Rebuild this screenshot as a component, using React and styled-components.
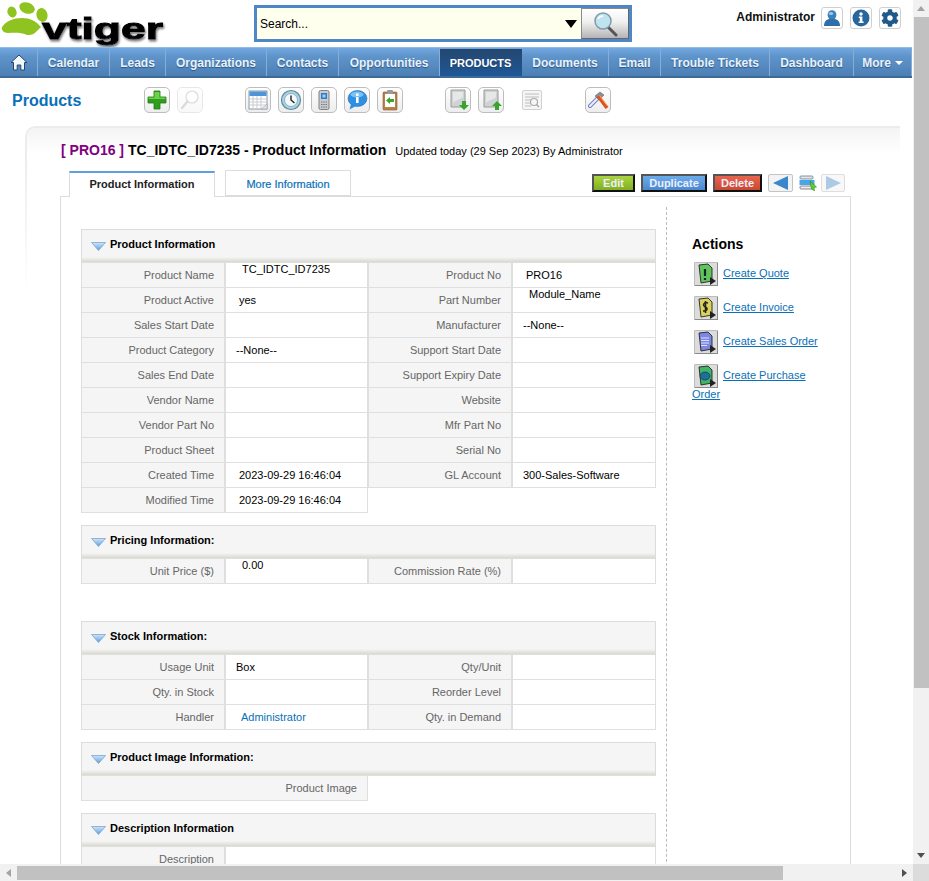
import React from 'react';
import styled, { createGlobalStyle } from 'styled-components';
import { FaCog } from 'react-icons/fa';

const GlobalStyle = createGlobalStyle`
    html, body {
        margin: 0;
        height: 100%;
        overflow: hidden;
        background: #fff;
        font-family: "Liberation Sans", Arial, sans-serif;
        font-size: 11px;
    }
`;

/* window frame with the two scrollbars */
const Shell = styled.div`
    display: grid;
    grid-template-columns: 913px 16px;
    grid-template-rows: 864px 17px;
    width: 929px;
    height: 881px;
`;

const Viewport = styled.div`
    overflow: hidden;
`;

const ScrollTrack = styled.div`
    display: flex;
    flex-direction: ${(p) => (p.$vertical ? 'column' : 'row')};
    background: #f1f1f1;
`;

const ScrollArrow = styled.div`
    flex: 0 0 17px;
    display: flex;
    align-items: center;
    justify-content: center;
    color: ${(p) => (p.$off ? '#a3a3a3' : '#505050')};
`;

const ScrollThumb = styled.div`
    flex: 0 0 ${(p) => p.$size}px;
    background: #c1c1c1;
    margin: ${(p) => (p.$vertical ? '0 0 0 1px' : '2px 0 1px 0')};
`;

const ScrollRest = styled.div`
    flex: 1;
`;

const ScrollCorner = styled.div`
    background: #dcdcdc;
`;

/* header */
const Header = styled.div`
    display: flex;
    height: 47px;
    width: 912px;
`;

const LogoBox = styled.div`
    flex: 0 0 254px;
`;

const SearchBox = styled.div`
    display: flex;
    align-items: center;
    box-sizing: border-box;
    width: 378px;
    height: 37px;
    margin-top: 5px;
    border: 3px solid #4f86c6;
    background: #ffffee;
`;

const SearchText = styled.div`
    flex: 1;
    padding-left: 3px;
    font-size: 12px;
    color: #000;
`;

const SearchCaret = styled.div`
    width: 0;
    height: 0;
    margin-right: 4px;
    border-left: 6px solid transparent;
    border-right: 6px solid transparent;
    border-top: 8px solid #000;
`;

const SearchButton = styled.div`
    display: flex;
    align-items: center;
    justify-content: center;
    box-sizing: border-box;
    width: 48px;
    height: 31px;
    border: 1px solid #8a8a8a;
    border-right-color: #666;
    border-bottom-color: #666;
    background: linear-gradient(#ffffff, #f0f0f0 45%, #b4b4b4);
`;

const UserArea = styled.div`
    display: flex;
    align-items: flex-start;
    gap: 7px;
    margin-left: auto;
    padding: 7px 11px 0 0;
`;

const UserName = styled.div`
    margin: 3px -1px 0 0;
    font-size: 12px;
    font-weight: bold;
    color: #111;
`;

const UserIcon = styled.div`
    display: flex;
    align-items: center;
    justify-content: center;
    box-sizing: border-box;
    width: 22px;
    height: 22px;
    border: 1px solid #cfcfcf;
    border-radius: 3px;
    color: #1f5a8c;
    background: #fff;
`;

/* main menu */
const Nav = styled.div`
    display: flex;
    box-sizing: border-box;
    width: 912px;
    height: 31px;
    background: linear-gradient(#72a9e0, #5f94cb 30%, #4c7fb4);
    border-top: 1px solid #8fbce8;
    border-bottom: 2px solid #3d6a96;
`;

const NavItem = styled.div`
    display: flex;
    align-items: center;
    justify-content: center;
    box-sizing: border-box;
    width: ${(p) => p.$w}px;
    margin-top: 1px;
    font-size: ${(p) => (p.$active ? 11 : 12)}px;
    font-weight: bold;
    color: ${(p) => (p.$active ? '#fff' : '#e8f2fb')};
    text-shadow: 0 1px 1px rgba(20, 50, 90, 0.6);
    border-right: 1px solid ${(p) => (p.$active ? 'transparent' : '#86aed8')};
    background: ${(p) => (p.$active ? 'linear-gradient(#24476f, #1f5797)' : 'none')};
`;

/* toolbar under the menu */
const ToolBar = styled.div`
    display: flex;
    align-items: flex-start;
    box-sizing: border-box;
    height: 48px;
    padding: 9px 0 0 12px;
`;

const PageTitle = styled.div`
    flex: 0 0 132px;
    padding-top: 5px;
    font-size: 16px;
    font-weight: bold;
    color: #0a70b8;
`;

const ToolGroup = styled.div`
    display: flex;
    align-items: center;
    gap: 7px;
    margin-right: ${(p) => p.$after || 0}px;
`;

const ToolButton = styled.div`
    box-sizing: border-box;
    width: 26px;
    height: 26px;
    border: 1px solid #bdbdbd;
    border-radius: 5px;
    background: linear-gradient(#ffffff, #ededed);
    opacity: ${(p) => (p.$faded ? 0.35 : 1)};
    & > svg {
        display: block;
        filter: blur(0.3px);
    }
`;

/* content card */
const Card = styled.div`
    position: relative;
    isolation: isolate;
    width: 875px;
    margin-left: 25px;
    padding: 16px 0 0 35px;
    box-sizing: border-box;
    &::before {
        content: '';
        position: absolute;
        z-index: -1;
        top: 0;
        left: 0;
        right: 0;
        height: 170px;
        box-sizing: border-box;
        border-top: 2px solid #ececec;
        border-left: 2px solid #ececec;
        border-top-left-radius: 10px;
        background: linear-gradient(#f4f4f4, #fff 26px);
        -webkit-mask-image: linear-gradient(#000 30px, transparent);
        mask-image: linear-gradient(#000 30px, transparent);
    }
`;

const TitleRow = styled.div`
    display: flex;
    align-items: baseline;
    height: 18px;
    margin-bottom: 10px;
    padding-left: 1px;
    color: #000;
`;

const RecordId = styled.span`
    margin-right: 4px;
    font-size: 14px;
    font-weight: bold;
    color: #800080;
`;

const RecordName = styled.span`
    margin-right: 9px;
    font-size: 14px;
    font-weight: bold;
`;

const Updated = styled.span`
    font-size: 11px;
`;

const TabBar = styled.div`
    position: relative;
    display: flex;
    align-items: flex-end;
    height: 27px;
    width: 791px;
    padding-left: 9px;
    box-sizing: border-box;
    margin-bottom: -1px;
`;

const Tab = styled.div`
    display: flex;
    align-items: center;
    justify-content: center;
    box-sizing: border-box;
    width: ${(p) => (p.$active ? 146 : 126)}px;
    height: 26px;
    margin: ${(p) => (p.$active ? '0 10px 0 0' : '0 0 1px 0')};
    padding: ${(p) => (p.$active ? '0 0 2px' : '2px 0 0')};
    border: 1px solid #dcdcdc;
    border-top: ${(p) => (p.$active ? '2px solid #5f9fdc' : '1px solid #dcdcdc')};
    border-bottom: ${(p) => (p.$active ? 'none' : '1px solid #dcdcdc')};
    background: #fff;
    font-size: 11px;
    font-weight: ${(p) => (p.$active ? 'bold' : 'normal')};
    color: ${(p) => (p.$active ? '#222' : '#0a70b8')};
    -webkit-text-stroke: ${(p) => (p.$active ? '0' : '0.2px #0a70b8')};
`;

const RecordActions = styled.div`
    display: flex;
    align-items: center;
    height: 18px;
    margin: 0 6px 5px auto;
`;

const ActionButton = styled.div`
    display: flex;
    align-items: center;
    justify-content: center;
    box-sizing: border-box;
    width: ${(p) => p.$w}px;
    height: 18px;
    margin-right: 6px;
    border: 2px solid;
    border-color: #555 #111 #111 #555;
    background: ${(p) => p.$bg};
    font-size: 11px;
    font-weight: bold;
    color: #eef;
`;

const PagerButton = styled.div`
    display: flex;
    align-items: center;
    justify-content: center;
    box-sizing: border-box;
    width: ${(p) => p.$w || 25}px;
    height: 18px;
    margin-left: ${(p) => p.$ml || 0}px;
    border: ${(p) => (p.$plain ? 'none' : '1px solid #c4c4c4')};
    border-radius: 2px;
    background: ${(p) => (p.$plain ? 'none' : '#f3f3f3')};
    opacity: ${(p) => (p.$faded ? 0.55 : 1)};
`;

const DetailBox = styled.div`
    display: flex;
    align-items: flex-start;
    box-sizing: border-box;
    width: 791px;
    height: 720px;
    border: 1px solid #dcdcdc;
    background: #fff;
`;

const LeftColumn = styled.div`
    box-sizing: border-box;
    flex: 0 0 606px;
    height: 700px;
    margin-top: 10px;
    padding: 22px 0 0 20px;
    border-right: 1px dashed #bbb;
`;

const RightColumn = styled.div`
    flex: 1;
    padding: 39px 0 0 25px;
    max-width: 135px;
`;

const Section = styled.div`
    width: 575px;
    margin-bottom: ${(p) => p.$after || 12}px;
`;

const SectionHead = styled.div`
    display: flex;
    align-items: flex-start;
    box-sizing: border-box;
    height: 34px;
    padding: 8px 0 0 9px;
    border: 1px solid #dcdcdc;
    border-bottom: none;
    background: linear-gradient(#f5f5f5 27px, #d9d9d2 32px, #e6e6e2);
    font-size: 11px;
    font-weight: bold;
    color: #000;
`;

const HeadArrow = styled.svg`
    margin: 4px 4px 0 0;
`;

const Rows = styled.div`
    display: grid;
    grid-template-columns: 144px 143px 144px 144px;
    grid-auto-rows: 25px;
`;

const Label = styled.div`
    display: flex;
    align-items: center;
    justify-content: flex-end;
    box-sizing: border-box;
    grid-column: span ${(p) => p.$span || 1};
    padding-right: 10px;
    border: 1px solid #dfdfdf;
    border-top: none;
    background: #f5f5f5;
    color: #666;
`;

const Value = styled.div`
    display: flex;
    align-items: center;
    box-sizing: border-box;
    grid-column: span ${(p) => p.$span || 1};
    padding-left: ${(p) => (p.$x || 13) - 1}px;
    padding-bottom: ${(p) => (p.$lift ? 12 : 0)}px;
    border: 1px solid #dfdfdf;
    border-top: none;
    color: ${(p) => (p.$link ? '#0a70b8' : '#000')};
`;

const ActionsTitle = styled.div`
    margin-bottom: 10px;
    font-size: 14px;
    font-weight: bold;
    color: #000;
`;

const ActionLink = styled.a`
    display: block;
    margin-bottom: 10px;
    color: #0a70b8;
    text-decoration: underline;
`;

const ActionIcon = styled.svg`
    vertical-align: middle;
    margin: 0 5px 0 2px;
    text-decoration: none;
`;

const Triangle = ({ up, down, left, right }) => {
    const pts = up ? '4,1 8,6 0,6' : down ? '0,1 8,1 4,6' : left ? '6,0 6,8 1,4' : '1,0 1,8 6,4';
    return (
        <svg width="8" height="8" viewBox="0 0 8 8">
            <polygon points={pts} fill="currentColor" />
        </svg>
    );
};

const Logo = () => (
    <svg width="170" height="47" viewBox="0 0 170 47">
        <defs>
            <filter id="soft" x="-10%" y="-10%" width="120%" height="130%">
                <feDropShadow dx="1" dy="2" stdDeviation="1.2" floodColor="#777" />
            </filter>
        </defs>
        <g fill="#8fc31f">
            <ellipse cx="12" cy="12" rx="4.5" ry="5.5" transform="rotate(-20 12 12)" />
            <ellipse cx="27" cy="8" rx="8" ry="5.5" transform="rotate(20 27 8)" />
            <ellipse cx="42" cy="15" rx="5.5" ry="7" transform="rotate(-15 42 15)" />
            <path d="M2 27 C6 21 14 18 22 18 C30 18 36 21 41 27 C37 30 35 36 27 35 C20 32 14 33 8 33 C4 33 1 30 2 27 Z" />
        </g>
        <text x="42" y="39" fontFamily="Liberation Sans" fontWeight="bold" fontSize="30" textLength="121" lengthAdjust="spacingAndGlyphs" fill="#000" stroke="#000" strokeWidth="1" filter="url(#soft)">vtiger</text>
    </svg>
);

const Magnifier = () => (
    <svg width="26" height="26" viewBox="0 0 26 26">
        <path d="M16 16 L24 24" stroke="#555" strokeWidth="3" strokeLinecap="round" />
        <circle cx="11" cy="10" r="8" fill="#bfe4f0" stroke="#7d9aa8" strokeWidth="1.5" />
        <path d="M6 8 C7 6 9 5 11 5" stroke="#fff" strokeWidth="1.5" fill="none" />
    </svg>
);

const ToolSvg = ({ children }) => (
    <svg width="24" height="24" viewBox="0 0 24 24">
        {children}
    </svg>
);

const Page = ({ children }) => (
    <>
        <path d="M5 2 H19 V19 H5 Z" fill="#cfd3d3" stroke="#9a9a9a" strokeWidth="1" />
        <path d="M7 4 H17 V9 C13 13 10 11 7 15 Z" fill="#e6e8e8" />
        {children}
    </>
);

const toolIcons = {
    plus: (
        <ToolSvg>
            <path d="M9 3 H15 V9 H21 V15 H15 V21 H9 V15 H3 V9 H9 Z" fill="#2f9e1f" stroke="#1f7a14" strokeWidth="0.8" />
            <path d="M9.5 4 H14.5 V9.5 H20.5 V11 H3.5 V9.5 H9.5 Z" fill="#6fd04a" />
        </ToolSvg>
    ),
    search: (
        <ToolSvg>
            <circle cx="14" cy="9" r="6" fill="#fff" stroke="#999" strokeWidth="1.2" />
            <path d="M9.5 13.5 L4 20" stroke="#999" strokeWidth="2.4" strokeLinecap="round" />
        </ToolSvg>
    ),
    calendar: (
        <ToolSvg>
            <rect x="3" y="3" width="18" height="18" fill="#fff" stroke="#8a9aa8" />
            <rect x="3.5" y="3.5" width="17" height="4.5" fill="#4f94d8" />
            <path d="M4 11 H20 M4 14 H20 M4 17 H20 M7 8 V21 M11 8 V21 M15 8 V21" stroke="#c8ccd0" strokeWidth="1" />
            <path d="M15 21 L21 16 V21 Z" fill="#dfe2e4" stroke="#999" strokeWidth="0.5" />
        </ToolSvg>
    ),
    clock: (
        <ToolSvg>
            <circle cx="12" cy="12" r="9.5" fill="#a8d4e4" stroke="#5f8a9c" strokeWidth="1.2" />
            <circle cx="12" cy="12" r="6.5" fill="#f4f8fa" stroke="#7fa3b3" strokeWidth="0.8" />
            <path d="M12 7.5 V12 L15.5 15" stroke="#222" strokeWidth="1.4" fill="none" />
        </ToolSvg>
    ),
    phone: (
        <ToolSvg>
            <rect x="7" y="2.5" width="10" height="19" rx="1.5" fill="#c9cccf" stroke="#7d8286" />
            <rect x="9" y="5" width="6" height="6" fill="#2f7cc8" />
            <rect x="10.5" y="6.5" width="3" height="3" fill="#9fd0f4" />
            <path d="M9 14 H15 M9 16.5 H15 M9 19 H15" stroke="#777" strokeWidth="1.2" strokeDasharray="1.5 0.75" />
        </ToolSvg>
    ),
    chat: (
        <ToolSvg>
            <ellipse cx="12.5" cy="10.5" rx="9.5" ry="8" fill="#2f8fe0" stroke="#1f6fb8" strokeWidth="0.6" />
            <path d="M6 16 L4.5 21.5 L11 18 Z" fill="#2f8fe0" />
            <ellipse cx="12" cy="6.5" rx="6.5" ry="3" fill="#7cc2f4" />
            <rect x="11" y="9" width="2.6" height="6" fill="#fff" />
            <rect x="11" y="5.5" width="2.6" height="2.4" fill="#fff" />
        </ToolSvg>
    ),
    clipboard: (
        <ToolSvg>
            <rect x="5" y="4" width="14" height="18" rx="1" fill="#b9804a" stroke="#8a5a2c" strokeWidth="0.6" />
            <rect x="7" y="6" width="10" height="13" fill="#fff" />
            <rect x="9" y="2" width="6" height="4" rx="1" fill="#9a9a9a" />
            <path d="M8 12.5 L12 9 V11 H16 V14 H12 V16 Z" fill="#3aa52a" />
        </ToolSvg>
    ),
    importFile: (
        <ToolSvg>
            <Page>
                <path d="M16 13 H20 V17 H23 L18 22 L13 17 H16 Z" fill="#3aa52a" />
            </Page>
        </ToolSvg>
    ),
    exportFile: (
        <ToolSvg>
            <Page>
                <path d="M18 13 L23 18 H20 V22 H16 V18 H13 Z" fill="#3aa52a" />
            </Page>
        </ToolSvg>
    ),
    tools: (
        <ToolSvg>
            <path d="M4 18 L12 10" stroke="#6f82c4" strokeWidth="4" strokeLinecap="round" />
            <path d="M4 18 L12 10" stroke="#eef" strokeWidth="2" strokeLinecap="round" />
            <path d="M9 8 L14 4 L18 7 L13 12 Z" fill="#8a8f98" stroke="#555" strokeWidth="0.5" />
            <path d="M12 8 L21 20" stroke="#e0502a" strokeWidth="3.6" />
            <path d="M13.5 7.5 L21.5 18" stroke="#f5b34a" strokeWidth="1" />
        </ToolSvg>
    ),
};

const FindIcon = styled.div`
    box-sizing: border-box;
    width: 20px;
    height: 20px;
    margin: 0 36px 0 11px;
    border: 1px solid #d0d0d0;
    border-radius: 2px;
    background: #f6f6f6;
    & > svg {
        display: block;
    }
`;

const actionIcons = {
    quote: { page: '#5fc45a', detail: <path d="M11 7 V14 M11 16 V18" stroke="#123" strokeWidth="2.2" /> },
    invoice: { page: '#d8d25a', detail: <path d="M14 7 C10 6 8 9 11 11 C14 12 14 15 9 15 M11.5 5 V17" stroke="#222" strokeWidth="1.5" fill="none" /> },
    sales: { page: '#7c86e4', detail: <path d="M7 8 H15 M7 10.5 H15 M7 13 H15 M7 15.5 H13" stroke="#dfe2ff" strokeWidth="1" /> },
    purchase: { page: '#3fb56a', detail: <ellipse cx="11" cy="12" rx="5" ry="4" fill="#1f6f9c" stroke="#123" strokeWidth="0.6" /> },
};

const ActionGlyph = ({ kind }) => (
    <ActionIcon width="24" height="24" viewBox="0 0 24 24">
        <rect x="0.5" y="0.5" width="23" height="23" fill="#dcdcdc" stroke="#8a8a8a" />
        <path d="M0 0 H24 M0 0 V24" stroke="#eee" strokeWidth="1" />
        <path d="M5 3 L14 2 L18 6 L18 19 L7 21 Z" fill={actionIcons[kind].page} stroke="#222" strokeWidth="0.9" />
        {actionIcons[kind].detail}
        <path d="M16 15 L22 19 L16 23 Z" fill="#222" />
    </ActionIcon>
);

const SectionArrow = () => (
    <HeadArrow width="15" height="9" viewBox="0 0 15 9">
        <defs>
            <linearGradient id="arrowFill" x1="0" y1="0" x2="0" y2="1">
                <stop offset="0" stopColor="#cfe4f8" />
                <stop offset="1" stopColor="#5f9fe0" />
            </linearGradient>
        </defs>
        <polygon points="0.5,0.5 14.5,0.5 7.5,8.5" fill="url(#arrowFill)" stroke="#6f9cc8" strokeWidth="0.7" />
    </HeadArrow>
);

const navItems = [
    ['Calendar', 72], ['Leads', 56], ['Organizations', 101], ['Contacts', 72], ['Opportunities', 101],
    ['PRODUCTS', 82, true], ['Documents', 87], ['Email', 52], ['Trouble Tickets', 109], ['Dashboard', 84], ['More', 58],
];

const productRows = [
    ['Product Name', { text: 'TC_IDTC_ID7235', x: 17, lift: true }, 'Product No', { text: 'PRO16', x: 14 }],
    ['Product Active', { text: 'yes', x: 14 }, 'Part Number', { text: 'Module_Name', x: 17, lift: true }],
    ['Sales Start Date', {}, 'Manufacturer', { text: '--None--', x: 11 }],
    ['Product Category', { text: '--None--', x: 11 }, 'Support Start Date', {}],
    ['Sales End Date', {}, 'Support Expiry Date', {}],
    ['Vendor Name', {}, 'Website', {}],
    ['Vendor Part No', {}, 'Mfr Part No', {}],
    ['Product Sheet', {}, 'Serial No', {}],
    ['Created Time', { text: '2023-09-29 16:46:04', x: 14 }, 'GL Account', { text: '300-Sales-Software', x: 11 }],
    ['Modified Time', { text: '2023-09-29 16:46:04', x: 14 }],
];

const pricingRows = [
    ['Unit Price ($)', { text: '0.00', x: 17, lift: true }, 'Commission Rate (%)', {}],
];

const stockRows = [
    ['Usage Unit', { text: 'Box', x: 11 }, 'Qty/Unit', {}],
    ['Qty. in Stock', {}, 'Reorder Level', {}],
    ['Handler', { text: 'Administrator', x: 16, link: true }, 'Qty. in Demand', {}],
];

const DetailRows = ({ rows }) => (
    <Rows>
        {rows.map((row) =>
            row.map((cell, i) =>
                i % 2 === 0 ? (
                    <Label key={cell}>{cell}</Label>
                ) : (
                    <Value key={row[i - 1] + '-value'} $x={cell.x} $lift={cell.lift} $link={cell.link}>
                        {cell.text}
                    </Value>
                )
            )
        )}
    </Rows>
);

const App = () => (
    <>
        <GlobalStyle />
        <Shell>
            <Viewport>
                <Header>
                    <LogoBox>
                        <Logo />
                    </LogoBox>
                    <SearchBox>
                        <SearchText>Search...</SearchText>
                        <SearchCaret />
                        <SearchButton>
                            <Magnifier />
                        </SearchButton>
                    </SearchBox>
                    <UserArea>
                        <UserName>Administrator</UserName>
                        <UserIcon>
                            <svg width="18" height="18" viewBox="0 0 18 18">
                                <ellipse cx="9" cy="6" rx="4.4" ry="4.8" fill="#3f7fb8" />
                                <path d="M1 17 C1 11 5 10 7 10 H11 C13 10 17 11 17 17 Z" fill="#2f6fa8" />
                                <ellipse cx="8" cy="4.5" rx="2.2" ry="1.6" fill="#9cc8e8" />
                            </svg>
                        </UserIcon>
                        <UserIcon>
                            <svg width="18" height="18" viewBox="0 0 18 18">
                                <circle cx="9" cy="9" r="8.5" fill="#27679c" />
                                <circle cx="9" cy="5" r="1.7" fill="#fff" />
                                <path d="M6.8 7.6 H10.4 V12.6 H11.6 V14 H6.6 V12.6 H7.8 V9 H6.8 Z" fill="#fff" />
                            </svg>
                        </UserIcon>
                        <UserIcon>
                            <FaCog size={18} />
                        </UserIcon>
                    </UserArea>
                </Header>

                <Nav>
                    <NavItem $w={38}>
                        <svg width="18" height="17" viewBox="0 0 18 17">
                            <path d="M9 1 L17 8.5 L14.5 8.5 V16 H10.8 V11 H7.2 V16 H3.5 V8.5 H1 Z" fill="#f2f7fc" stroke="#26476b" strokeWidth="1" />
                        </svg>
                    </NavItem>
                    {navItems.map(([name, w, active]) => (
                        <NavItem key={name} $w={w} $active={active}>
                            {name}
                            {name === 'More' && (
                                <svg width="8" height="4" viewBox="0 0 8 4" style={{ marginLeft: 4 }}>
                                    <polygon points="0,0 8,0 4,4" fill="#fff" />
                                </svg>
                            )}
                        </NavItem>
                    ))}
                </Nav>

                <ToolBar>
                    <PageTitle>Products</PageTitle>
                    <ToolGroup $after={42}>
                        <ToolButton>{toolIcons.plus}</ToolButton>
                        <ToolButton $faded>{toolIcons.search}</ToolButton>
                    </ToolGroup>
                    <ToolGroup $after={42}>
                        <ToolButton>{toolIcons.calendar}</ToolButton>
                        <ToolButton>{toolIcons.clock}</ToolButton>
                        <ToolButton>{toolIcons.phone}</ToolButton>
                        <ToolButton>{toolIcons.chat}</ToolButton>
                        <ToolButton>{toolIcons.clipboard}</ToolButton>
                    </ToolGroup>
                    <ToolGroup>
                        <ToolButton>{toolIcons.importFile}</ToolButton>
                        <ToolButton>{toolIcons.exportFile}</ToolButton>
                        <FindIcon>
                            <svg width="18" height="18" viewBox="0 0 18 18">
                                <path d="M2 3 H16 M2 6 H16 M2 9 H8 M2 12 H7 M2 15 H8" stroke="#bbb" strokeWidth="1.2" />
                                <circle cx="11" cy="11" r="3.5" fill="none" stroke="#aaa" strokeWidth="1.2" />
                                <path d="M13.5 13.5 L16 16" stroke="#aaa" strokeWidth="1.5" />
                            </svg>
                        </FindIcon>
                        <ToolButton>{toolIcons.tools}</ToolButton>
                    </ToolGroup>
                </ToolBar>

                <Card>
                    <TitleRow>
                        <RecordId>[ PRO16 ]</RecordId>
                        <RecordName>TC_IDTC_ID7235 - Product Information</RecordName>
                        <Updated>Updated today (29 Sep 2023) By Administrator</Updated>
                    </TitleRow>

                    <TabBar>
                        <Tab $active>Product Information</Tab>
                        <Tab>More Information</Tab>
                        <RecordActions>
                            <ActionButton $w={43} $bg="linear-gradient(#a9d63e, #7fae22)">Edit</ActionButton>
                            <ActionButton $w={66} $bg="linear-gradient(#6cabea, #4a89cf)">Duplicate</ActionButton>
                            <ActionButton $w={49} $bg="linear-gradient(#ea644c, #c8492f)">Delete</ActionButton>
                            <PagerButton>
                                <svg width="16" height="14" viewBox="0 0 16 14">
                                    <polygon points="15,0 15,14 0,7" fill="#3b86cc" />
                                </svg>
                            </PagerButton>
                            <PagerButton $plain $w={18} $ml={6}>
                                <svg width="18" height="16" viewBox="0 0 18 16">
                                    <rect x="1" y="1" width="13" height="3" rx="1" fill="#e4e4e4" stroke="#5b7f9b" strokeWidth="0.8" />
                                    <rect x="0.5" y="5" width="15" height="5" fill="#49a6e6" />
                                    <rect x="1" y="11" width="13" height="3" rx="1" fill="#eee" stroke="#6b6b6b" strokeWidth="0.8" />
                                    <path d="M11 6 L17.5 12 L15 12.5 L15.5 15.8 L12.5 14 Z" fill="#5ed02e" stroke="#2f8a14" strokeWidth="0.6" />
                                </svg>
                            </PagerButton>
                            <PagerButton $faded $w={24} $ml={4}>
                                <svg width="16" height="14" viewBox="0 0 16 14">
                                    <polygon points="1,0 1,14 16,7" fill="#6b9fd0" />
                                </svg>
                            </PagerButton>
                        </RecordActions>
                    </TabBar>

                    <DetailBox>
                        <LeftColumn>
                            <Section>
                                <SectionHead><SectionArrow />Product Information</SectionHead>
                                <DetailRows rows={productRows} />
                            </Section>
                            <Section $after={37}>
                                <SectionHead><SectionArrow />Pricing Information:</SectionHead>
                                <DetailRows rows={pricingRows} />
                            </Section>
                            <Section>
                                <SectionHead><SectionArrow />Stock Information:</SectionHead>
                                <DetailRows rows={stockRows} />
                            </Section>
                            <Section>
                                <SectionHead><SectionArrow />Product Image Information:</SectionHead>
                                <Rows>
                                    <Label $span={2}>Product Image</Label>
                                </Rows>
                            </Section>
                            <Section>
                                <SectionHead><SectionArrow />Description Information</SectionHead>
                                <Rows>
                                    <Label>Description</Label>
                                    <Value $span={3} />
                                </Rows>
                            </Section>
                        </LeftColumn>
                        <RightColumn>
                            <ActionsTitle>Actions</ActionsTitle>
                            <ActionLink><ActionGlyph kind="quote" />Create Quote</ActionLink>
                            <ActionLink><ActionGlyph kind="invoice" />Create Invoice</ActionLink>
                            <ActionLink><ActionGlyph kind="sales" />Create Sales Order</ActionLink>
                            <ActionLink><ActionGlyph kind="purchase" />Create Purchase Order</ActionLink>
                        </RightColumn>
                    </DetailBox>
                </Card>
            </Viewport>

            <ScrollTrack $vertical>
                <ScrollArrow $off><Triangle up /></ScrollArrow>
                <ScrollThumb $vertical $size={671} />
                <ScrollRest />
                <ScrollArrow><Triangle down /></ScrollArrow>
            </ScrollTrack>
            <ScrollTrack>
                <ScrollArrow $off><Triangle left /></ScrollArrow>
                <ScrollThumb $size={766} />
                <ScrollRest />
                <ScrollArrow><Triangle right /></ScrollArrow>
            </ScrollTrack>
            <ScrollCorner />
        </Shell>
    </>
);

export default App;
